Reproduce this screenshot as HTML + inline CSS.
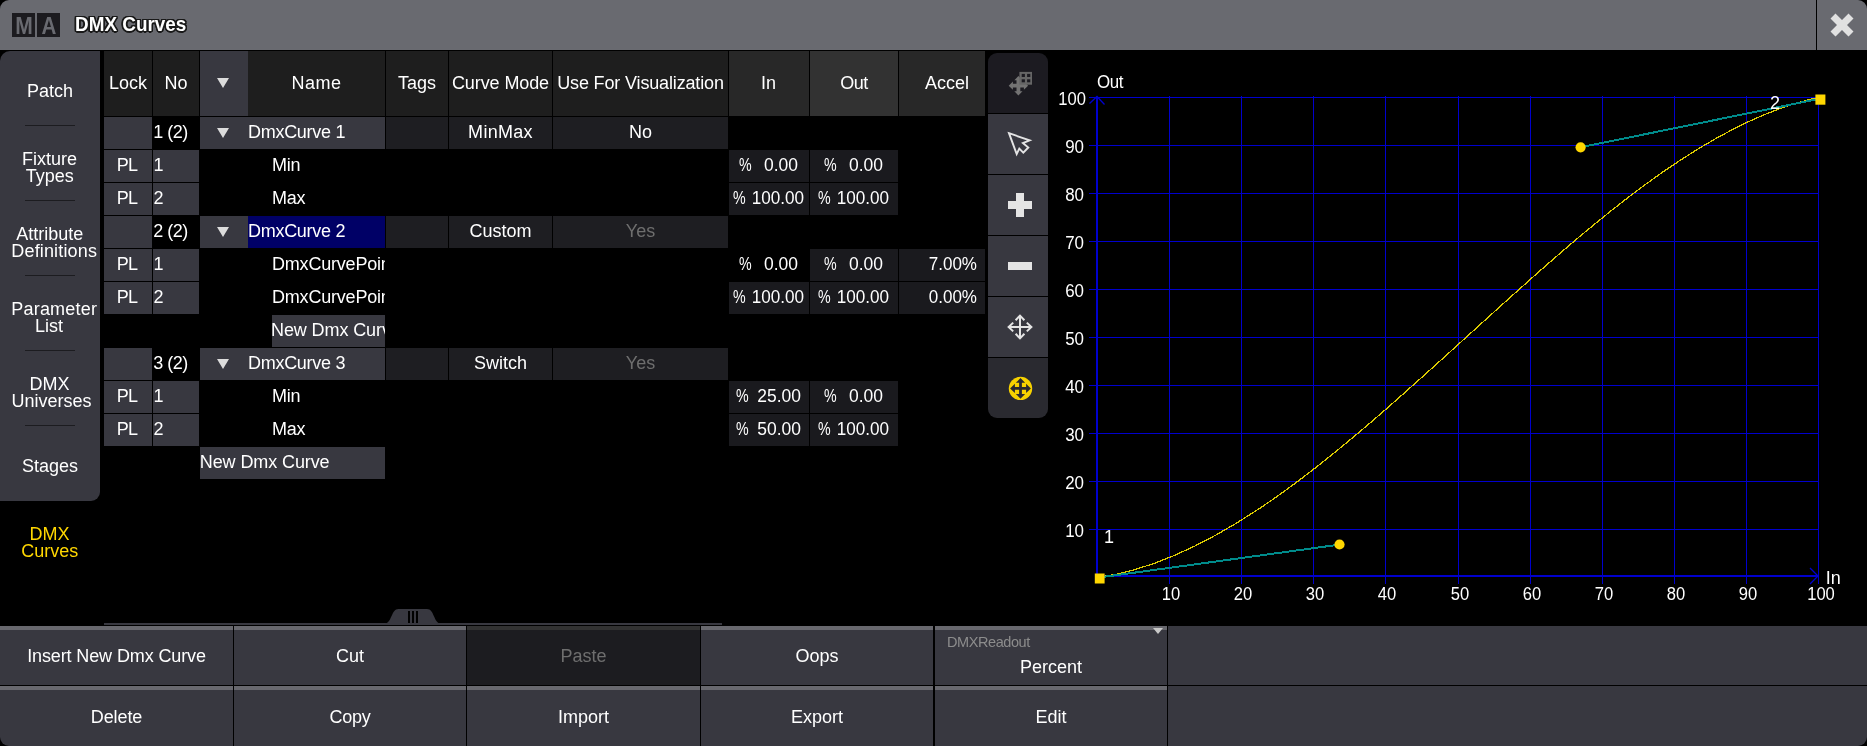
<!DOCTYPE html>
<html lang="en"><head><meta charset="utf-8"><title>DMX Curves</title>
<style>
html,body{margin:0;padding:0;background:#000;}
body{width:1867px;height:746px;position:relative;overflow:hidden;font-family:"Liberation Sans",sans-serif;font-size:18px;line-height:22px;color:#fff;}
.b{position:absolute;overflow:hidden;}
.t{position:absolute;white-space:pre;}
svg{position:absolute;left:0;top:0;}
#r{position:absolute;left:0;top:0;width:1867px;height:746px;will-change:transform;}
.sx{transform-origin:0 50%;}
</style></head><body><div id="r">

<div class="b" style="left:0px;top:0px;width:1867px;height:50px;background:#696a70;border-radius:9px 9px 0 0;"></div>
<div class="b" style="left:1816px;top:0px;width:1px;height:50px;background:#000;"></div>
<div class="b" style="left:12px;top:13px;width:23px;height:24px;background:#1c1b1f;"></div>
<div class="b" style="left:37px;top:13px;width:23px;height:24px;background:#1c1b1f;"></div>
<div class="t" style="top:11.00px;left:3.50px;width:40px;text-align:center;font-size:24.5px;line-height:29px;color:#696a70;font-weight:bold;transform:scaleX(0.86);">M</div>
<div class="t" style="top:11.00px;left:28.70px;width:40px;text-align:center;font-size:24.5px;line-height:29px;color:#696a70;font-weight:bold;transform:scaleX(0.84);">A</div>
<div class="t" style="top:11.00px;left:74.50px;font-size:21px;line-height:25px;font-weight:bold;transform:scaleX(0.9);transform-origin:0 50%;text-shadow:1.67px 0.00px 0 #1a1a1a,1.54px 0.57px 0 #1a1a1a,1.18px 1.06px 0 #1a1a1a,0.64px 1.39px 0 #1a1a1a,0.00px 1.50px 0 #1a1a1a,-0.64px 1.39px 0 #1a1a1a,-1.18px 1.06px 0 #1a1a1a,-1.54px 0.57px 0 #1a1a1a,-1.67px 0.00px 0 #1a1a1a,-1.54px -0.57px 0 #1a1a1a,-1.18px -1.06px 0 #1a1a1a,-0.64px -1.39px 0 #1a1a1a,-0.00px -1.50px 0 #1a1a1a,0.64px -1.39px 0 #1a1a1a,1.18px -1.06px 0 #1a1a1a,1.54px -0.57px 0 #1a1a1a,0 0 1px #1a1a1a;">DMX Curves</div>
<svg width="1867" height="746"><path d="M1830.5,18.5L1835.5,13.5L1842,20L1848.5,13.5L1853.5,18.5L1847,25L1853.5,31.5L1848.5,36.5L1842,30L1835.5,36.5L1830.5,31.5L1837,25Z" fill="#e1e1e1"/></svg>
<div class="b" style="left:0px;top:51px;width:100px;height:450px;background:#383840;border-radius:10px 0 9px 0;"></div>
<div class="b" style="left:25px;top:125px;width:50px;height:1px;background:#1c1c20;"></div>
<div class="b" style="left:25px;top:200px;width:50px;height:1px;background:#1c1c20;"></div>
<div class="b" style="left:25px;top:275px;width:50px;height:1px;background:#1c1c20;"></div>
<div class="b" style="left:25px;top:350px;width:50px;height:1px;background:#1c1c20;"></div>
<div class="b" style="left:25px;top:425px;width:50px;height:1px;background:#1c1c20;"></div>
<div class="t" style="top:80.00px;left:-10.00px;width:120px;text-align:center;">Patch</div>
<div class="t" style="top:148.00px;left:-10.50px;width:120px;text-align:center;">Fixture</div>
<div class="t" style="top:165.00px;left:-10.20px;width:120px;text-align:center;">Types</div>
<div class="t" style="top:223.00px;left:-10.20px;width:120px;text-align:center;">Attribute</div>
<div class="t" style="top:240.00px;left:-5.80px;width:120px;text-align:center;letter-spacing:0.15px;">Definitions</div>
<div class="t" style="top:298.00px;left:-5.80px;width:120px;text-align:center;letter-spacing:0.2px;">Parameter</div>
<div class="t" style="top:315.00px;left:-11.00px;width:120px;text-align:center;">List</div>
<div class="t" style="top:373.00px;left:-10.50px;width:120px;text-align:center;">DMX</div>
<div class="t" style="top:390.00px;left:-8.50px;width:120px;text-align:center;">Universes</div>
<div class="t" style="top:455.00px;left:-10.00px;width:120px;text-align:center;">Stages</div>
<div class="t" style="top:523.00px;left:-10.50px;width:120px;text-align:center;color:#ffd700;">DMX</div>
<div class="t" style="top:540.00px;left:-10.20px;width:120px;text-align:center;color:#ffd700;">Curves</div>
<div class="b" style="left:104px;top:51px;width:48px;height:65px;background:#1e1e1e;"></div>
<div class="b" style="left:153px;top:51px;width:46px;height:65px;background:#1e1e1e;"></div>
<div class="b" style="left:200px;top:51px;width:185px;height:65px;background:#1e1e1e;"></div>
<div class="b" style="left:386px;top:51px;width:62px;height:65px;background:#1e1e1e;"></div>
<div class="b" style="left:449px;top:51px;width:103px;height:65px;background:#1e1e1e;"></div>
<div class="b" style="left:553px;top:51px;width:175px;height:65px;background:#1e1e1e;"></div>
<div class="b" style="left:729px;top:51px;width:80px;height:65px;background:#282828;"></div>
<div class="b" style="left:810px;top:51px;width:88px;height:65px;background:#323232;"></div>
<div class="b" style="left:899px;top:51px;width:86px;height:65px;background:#282828;"></div>
<div class="b" style="left:200px;top:51px;width:48px;height:65px;background:#383840;"></div>
<div class="t" style="top:72.00px;left:98.00px;width:60px;text-align:center;">Lock</div>
<div class="t" style="top:72.00px;left:146.00px;width:60px;text-align:center;">No</div>
<div class="t" style="top:72.00px;left:266.50px;width:100px;text-align:center;letter-spacing:0.5px;">Name</div>
<div class="t" style="top:72.00px;left:377.00px;width:80px;text-align:center;">Tags</div>
<div class="t" style="top:72.00px;left:430.50px;width:140px;text-align:center;letter-spacing:-0.1px;">Curve Mode</div>
<div class="t" style="top:72.00px;left:530.50px;width:220px;text-align:center;letter-spacing:-0.15px;">Use For Visualization</div>
<div class="t" style="top:72.00px;left:738.50px;width:60px;text-align:center;">In</div>
<div class="t" style="top:72.00px;left:824.00px;width:60px;text-align:center;letter-spacing:-0.5px;">Out</div>
<div class="t" style="top:72.00px;left:907.00px;width:80px;text-align:center;">Accel</div>
<div class="b" style="left:104px;top:117px;width:48px;height:32px;background:#383840;"></div>
<div class="t" style="top:121.00px;left:153.20px;letter-spacing:-0.5px;">1 (2)</div>
<div class="b" style="left:200px;top:117px;width:185px;height:32px;background:#383840;"></div>
<div class="t" style="top:121.00px;left:248.00px;letter-spacing:-0.28px;">DmxCurve 1</div>
<div class="b" style="left:386px;top:117px;width:62px;height:32px;background:#1e1e22;"></div>
<div class="b" style="left:449px;top:117px;width:103px;height:32px;background:#1e1e22;"></div>
<div class="b" style="left:553px;top:117px;width:175px;height:32px;background:#1e1e22;"></div>
<div class="t" style="top:121.00px;left:440.50px;width:120px;text-align:center;letter-spacing:0.3px;">MinMax</div>
<div class="t" style="top:121.00px;left:580.50px;width:120px;text-align:center;">No</div>
<div class="b" style="left:104px;top:150px;width:48px;height:32px;background:#383840;"></div>
<div class="b" style="left:153px;top:150px;width:46px;height:32px;background:#383840;"></div>
<div class="t" style="top:154.00px;left:103.00px;width:48px;text-align:center;letter-spacing:-0.7px;">PL</div>
<div class="t" style="top:154.00px;left:153.60px;">1</div>
<div class="b" style="left:272px;top:150px;width:113px;height:32px;">
<div class="t" style="left:0;top:4.00px;letter-spacing:-0.2px;">Min</div></div>
<div class="b" style="left:729px;top:150px;width:80px;height:32px;background:#1a1a1e;"></div>
<div class="b" style="left:810px;top:150px;width:88px;height:32px;background:#1a1a1e;"></div>
<div class="t" style="top:154.00px;left:739.40px;transform:scaleX(0.79);transform-origin:0 50%;">%</div>
<div class="t" style="top:154.00px;left:728.10px;width:70px;text-align:right;transform:scaleX(0.97);transform-origin:100% 50%;">0.00</div>
<div class="t" style="top:154.00px;left:824.40px;transform:scaleX(0.79);transform-origin:0 50%;">%</div>
<div class="t" style="top:154.00px;left:813.10px;width:70px;text-align:right;transform:scaleX(0.97);transform-origin:100% 50%;">0.00</div>
<div class="b" style="left:104px;top:183px;width:48px;height:32px;background:#383840;"></div>
<div class="b" style="left:153px;top:183px;width:46px;height:32px;background:#383840;"></div>
<div class="t" style="top:187.00px;left:103.00px;width:48px;text-align:center;letter-spacing:-0.7px;">PL</div>
<div class="t" style="top:187.00px;left:153.60px;">2</div>
<div class="b" style="left:272px;top:183px;width:113px;height:32px;">
<div class="t" style="left:0;top:4.00px;letter-spacing:-0.2px;">Max</div></div>
<div class="b" style="left:729px;top:183px;width:80px;height:32px;background:#1a1a1e;"></div>
<div class="b" style="left:810px;top:183px;width:88px;height:32px;background:#1a1a1e;"></div>
<div class="t" style="top:187.00px;left:733.00px;transform:scaleX(0.79);transform-origin:0 50%;">%</div>
<div class="t" style="top:187.00px;left:734.20px;width:70px;text-align:right;transform:scaleX(0.95);transform-origin:100% 50%;">100.00</div>
<div class="t" style="top:187.00px;left:818.00px;transform:scaleX(0.79);transform-origin:0 50%;">%</div>
<div class="t" style="top:187.00px;left:819.20px;width:70px;text-align:right;transform:scaleX(0.95);transform-origin:100% 50%;">100.00</div>
<div class="b" style="left:104px;top:216px;width:48px;height:32px;background:#383840;"></div>
<div class="t" style="top:220.00px;left:153.20px;letter-spacing:-0.5px;">2 (2)</div>
<div class="b" style="left:200px;top:216px;width:185px;height:32px;background:#383840;"></div>
<div class="b" style="left:248px;top:216px;width:137px;height:32px;background:#000066;"></div>
<div class="t" style="top:220.00px;left:248.00px;letter-spacing:-0.28px;">DmxCurve 2</div>
<div class="b" style="left:386px;top:216px;width:62px;height:32px;background:#1e1e22;"></div>
<div class="b" style="left:449px;top:216px;width:103px;height:32px;background:#1e1e22;"></div>
<div class="b" style="left:553px;top:216px;width:175px;height:32px;background:#1e1e22;"></div>
<div class="t" style="top:220.00px;left:440.50px;width:120px;text-align:center;">Custom</div>
<div class="t" style="top:220.00px;left:580.50px;width:120px;text-align:center;color:#6e6e6e;">Yes</div>
<div class="b" style="left:104px;top:249px;width:48px;height:32px;background:#383840;"></div>
<div class="b" style="left:153px;top:249px;width:46px;height:32px;background:#383840;"></div>
<div class="t" style="top:253.00px;left:103.00px;width:48px;text-align:center;letter-spacing:-0.7px;">PL</div>
<div class="t" style="top:253.00px;left:153.60px;">1</div>
<div class="b" style="left:272px;top:249px;width:113px;height:32px;">
<div class="t" style="left:0;top:4.00px;letter-spacing:-0.2px;">DmxCurvePoint 1</div></div>
<div class="b" style="left:810px;top:249px;width:88px;height:32px;background:#1a1a1e;"></div>
<div class="t" style="top:253.00px;left:739.40px;transform:scaleX(0.79);transform-origin:0 50%;">%</div>
<div class="t" style="top:253.00px;left:728.10px;width:70px;text-align:right;transform:scaleX(0.97);transform-origin:100% 50%;">0.00</div>
<div class="t" style="top:253.00px;left:824.40px;transform:scaleX(0.79);transform-origin:0 50%;">%</div>
<div class="t" style="top:253.00px;left:813.10px;width:70px;text-align:right;transform:scaleX(0.97);transform-origin:100% 50%;">0.00</div>
<div class="b" style="left:899px;top:249px;width:86px;height:32px;background:#1a1a1e;"></div>
<div class="t" style="top:253.00px;left:897.20px;width:80px;text-align:right;transform:scaleX(0.945);transform-origin:100% 50%;">7.00%</div>
<div class="b" style="left:104px;top:282px;width:48px;height:32px;background:#383840;"></div>
<div class="b" style="left:153px;top:282px;width:46px;height:32px;background:#383840;"></div>
<div class="t" style="top:286.00px;left:103.00px;width:48px;text-align:center;letter-spacing:-0.7px;">PL</div>
<div class="t" style="top:286.00px;left:153.60px;">2</div>
<div class="b" style="left:272px;top:282px;width:113px;height:32px;">
<div class="t" style="left:0;top:4.00px;letter-spacing:-0.2px;">DmxCurvePoint 2</div></div>
<div class="b" style="left:729px;top:282px;width:80px;height:32px;background:#1a1a1e;"></div>
<div class="b" style="left:810px;top:282px;width:88px;height:32px;background:#1a1a1e;"></div>
<div class="t" style="top:286.00px;left:733.00px;transform:scaleX(0.79);transform-origin:0 50%;">%</div>
<div class="t" style="top:286.00px;left:734.20px;width:70px;text-align:right;transform:scaleX(0.95);transform-origin:100% 50%;">100.00</div>
<div class="t" style="top:286.00px;left:818.00px;transform:scaleX(0.79);transform-origin:0 50%;">%</div>
<div class="t" style="top:286.00px;left:819.20px;width:70px;text-align:right;transform:scaleX(0.95);transform-origin:100% 50%;">100.00</div>
<div class="b" style="left:899px;top:282px;width:86px;height:32px;background:#1a1a1e;"></div>
<div class="t" style="top:286.00px;left:897.20px;width:80px;text-align:right;transform:scaleX(0.945);transform-origin:100% 50%;">0.00%</div>
<div class="b" style="left:272px;top:315px;width:113px;height:32px;background:#383840;"><div class="t" style="left:-1px;top:4.00px;letter-spacing:-0.1px;">New Dmx Curve Point</div></div>
<div class="b" style="left:104px;top:348px;width:48px;height:32px;background:#383840;"></div>
<div class="t" style="top:352.00px;left:153.20px;letter-spacing:-0.5px;">3 (2)</div>
<div class="b" style="left:200px;top:348px;width:185px;height:32px;background:#383840;"></div>
<div class="t" style="top:352.00px;left:248.00px;letter-spacing:-0.28px;">DmxCurve 3</div>
<div class="b" style="left:386px;top:348px;width:62px;height:32px;background:#1e1e22;"></div>
<div class="b" style="left:449px;top:348px;width:103px;height:32px;background:#1e1e22;"></div>
<div class="b" style="left:553px;top:348px;width:175px;height:32px;background:#1e1e22;"></div>
<div class="t" style="top:352.00px;left:440.50px;width:120px;text-align:center;">Switch</div>
<div class="t" style="top:352.00px;left:580.50px;width:120px;text-align:center;color:#6e6e6e;">Yes</div>
<div class="b" style="left:104px;top:381px;width:48px;height:32px;background:#383840;"></div>
<div class="b" style="left:153px;top:381px;width:46px;height:32px;background:#383840;"></div>
<div class="t" style="top:385.00px;left:103.00px;width:48px;text-align:center;letter-spacing:-0.7px;">PL</div>
<div class="t" style="top:385.00px;left:153.60px;">1</div>
<div class="b" style="left:272px;top:381px;width:113px;height:32px;">
<div class="t" style="left:0;top:4.00px;letter-spacing:-0.2px;">Min</div></div>
<div class="b" style="left:729px;top:381px;width:80px;height:32px;background:#1a1a1e;"></div>
<div class="b" style="left:810px;top:381px;width:88px;height:32px;background:#1a1a1e;"></div>
<div class="t" style="top:385.00px;left:736.20px;transform:scaleX(0.79);transform-origin:0 50%;">%</div>
<div class="t" style="top:385.00px;left:731.00px;width:70px;text-align:right;transform:scaleX(0.97);transform-origin:100% 50%;">25.00</div>
<div class="t" style="top:385.00px;left:824.40px;transform:scaleX(0.79);transform-origin:0 50%;">%</div>
<div class="t" style="top:385.00px;left:813.10px;width:70px;text-align:right;transform:scaleX(0.97);transform-origin:100% 50%;">0.00</div>
<div class="b" style="left:104px;top:414px;width:48px;height:32px;background:#383840;"></div>
<div class="b" style="left:153px;top:414px;width:46px;height:32px;background:#383840;"></div>
<div class="t" style="top:418.00px;left:103.00px;width:48px;text-align:center;letter-spacing:-0.7px;">PL</div>
<div class="t" style="top:418.00px;left:153.60px;">2</div>
<div class="b" style="left:272px;top:414px;width:113px;height:32px;">
<div class="t" style="left:0;top:4.00px;letter-spacing:-0.2px;">Max</div></div>
<div class="b" style="left:729px;top:414px;width:80px;height:32px;background:#1a1a1e;"></div>
<div class="b" style="left:810px;top:414px;width:88px;height:32px;background:#1a1a1e;"></div>
<div class="t" style="top:418.00px;left:736.20px;transform:scaleX(0.79);transform-origin:0 50%;">%</div>
<div class="t" style="top:418.00px;left:731.00px;width:70px;text-align:right;transform:scaleX(0.97);transform-origin:100% 50%;">50.00</div>
<div class="t" style="top:418.00px;left:818.00px;transform:scaleX(0.79);transform-origin:0 50%;">%</div>
<div class="t" style="top:418.00px;left:819.20px;width:70px;text-align:right;transform:scaleX(0.95);transform-origin:100% 50%;">100.00</div>
<div class="b" style="left:200px;top:447px;width:185px;height:32px;background:#383840;"></div>
<div class="t" style="top:451.00px;left:199.80px;letter-spacing:-0.1px;">New Dmx Curve</div>
<svg width="1867" height="746" style="pointer-events:none"><polygon points="217.0,78.1 229.0,78.1 223,88.1" fill="#dcdcdc"/></svg>
<svg width="1867" height="746" style="pointer-events:none"><polygon points="217.0,128.1 229.0,128.1 223,138.1" fill="#dcdcdc"/></svg>
<svg width="1867" height="746" style="pointer-events:none"><polygon points="217.0,227.1 229.0,227.1 223,237.1" fill="#dcdcdc"/></svg>
<svg width="1867" height="746" style="pointer-events:none"><polygon points="217.0,359.1 229.0,359.1 223,369.1" fill="#dcdcdc"/></svg>
<div class="b" style="left:104px;top:623px;width:618px;height:2px;background:#383840;"></div>
<svg width="1867" height="746"><path d="M384.5,623.5 C392,623.5 391,609 398.5,609 L427,609 C434.5,609 433.5,623.5 441,623.5 Z" fill="#383840"/><rect x="408" y="611" width="2" height="12" fill="#000"/><rect x="412" y="611" width="2" height="12" fill="#000"/><rect x="416" y="611" width="2" height="12" fill="#000"/></svg>
<div class="b" style="left:988px;top:53px;width:60px;height:60px;background:#1c1b21;border-radius:9px 9px 0 0;"></div>
<div class="b" style="left:988px;top:114px;width:60px;height:60px;background:#383840;border-radius:0;"></div>
<div class="b" style="left:988px;top:175px;width:60px;height:60px;background:#383840;border-radius:0;"></div>
<div class="b" style="left:988px;top:236px;width:60px;height:60px;background:#383840;border-radius:0;"></div>
<div class="b" style="left:988px;top:297px;width:60px;height:60px;background:#383840;border-radius:0;"></div>
<div class="b" style="left:988px;top:358px;width:60px;height:60px;background:#2a2a30;border-radius:0 0 9px 9px;"></div>
<svg width="1867" height="746">
<g fill="#6c6c6c">
<polygon points="1016.50,83.80 1016.50,80.20 1014.30,80.20 1018.40,76.00 1022.50,80.20 1020.30,80.20 1020.30,83.80 1023.90,83.80 1023.90,81.60 1028.10,85.70 1023.90,89.80 1023.90,87.60 1020.30,87.60 1020.30,91.20 1022.50,91.20 1018.40,95.40 1014.30,91.20 1016.50,91.20 1016.50,87.60 1012.90,87.60 1012.90,89.80 1008.70,85.70 1012.90,81.60 1012.90,83.80" fill="#737373"/><rect x="1019.4" y="71.9" width="12.6" height="12.8" fill="#666"/></g>
<g fill="#1c1b21"><rect x="1021.7" y="73.9" width="3.2" height="3.1"/><rect x="1027.1" y="73.9" width="3.2" height="3.1"/><rect x="1021.7" y="79.3" width="3.2" height="3"/><rect x="1027.1" y="79.3" width="3.2" height="3"/></g>
<polygon points="21,19.2 41.7,26.4 34.9,29.1 40.3,33.5 35.3,38.7 31.3,34.7 28.7,40" transform="translate(988,114)" fill="none" stroke="#e4e4e4" stroke-width="1.9" stroke-linejoin="miter"/>
<path d="M1016,193h8v8h8v8h-8v8h-8v-8h-8v-8h8z" fill="#e4e4e4"/>
<rect x="1008" y="262" width="24" height="8" fill="#e4e4e4"/>
<g stroke="#e4e4e4" stroke-width="2" fill="none"><path d="M1020,315.5V338.5 M1008.5,327H1031.5 M1015.6,320.2L1020,315.6L1024.4,320.2 M1015.6,333.8L1020,338.4L1024.4,333.8 M1013.2,322.6L1008.6,327L1013.2,331.4 M1026.8,322.6L1031.4,327L1026.8,331.4"/></g>
<circle cx="1020.5" cy="388.4" r="11.7" fill="#f7d200"/>
<polygon points="1019.10,387.00 1019.10,382.80 1015.90,382.80 1020.50,378.00 1025.10,382.80 1021.90,382.80 1021.90,387.00 1026.10,387.00 1026.10,383.80 1030.90,388.40 1026.10,393.00 1026.10,389.80 1021.90,389.80 1021.90,394.00 1025.10,394.00 1020.50,398.80 1015.90,394.00 1019.10,394.00 1019.10,389.80 1014.90,389.80 1014.90,393.00 1010.10,388.40 1014.90,383.80 1014.90,387.00" fill="#2a2a30"/>
</svg>
<svg width="1867" height="746" shape-rendering="crispEdges">
<rect x="1169" y="96" width="1" height="488" fill="#0000cd"/>
<rect x="1241" y="96" width="1" height="488" fill="#0000cd"/>
<rect x="1313" y="96" width="1" height="488" fill="#0000cd"/>
<rect x="1385" y="96" width="1" height="488" fill="#0000cd"/>
<rect x="1458" y="96" width="1" height="488" fill="#0000cd"/>
<rect x="1530" y="96" width="1" height="488" fill="#0000cd"/>
<rect x="1602" y="96" width="1" height="488" fill="#0000cd"/>
<rect x="1674" y="96" width="1" height="488" fill="#0000cd"/>
<rect x="1746" y="96" width="1" height="488" fill="#0000cd"/>
<rect x="1818" y="96" width="1" height="488" fill="#0000cd"/>
<rect x="1089" y="97" width="730" height="1" fill="#0000cd"/>
<rect x="1089" y="145" width="730" height="1" fill="#0000cd"/>
<rect x="1089" y="193" width="730" height="1" fill="#0000cd"/>
<rect x="1089" y="241" width="730" height="1" fill="#0000cd"/>
<rect x="1089" y="289" width="730" height="1" fill="#0000cd"/>
<rect x="1089" y="337" width="730" height="1" fill="#0000cd"/>
<rect x="1089" y="385" width="730" height="1" fill="#0000cd"/>
<rect x="1089" y="433" width="730" height="1" fill="#0000cd"/>
<rect x="1089" y="481" width="730" height="1" fill="#0000cd"/>
<rect x="1089" y="529" width="730" height="1" fill="#0000cd"/>
<rect x="1096" y="97" width="2" height="480" fill="#0000cd"/>
<rect x="1096" y="575" width="723" height="2" fill="#0000cd"/>
</svg>
<svg width="1867" height="746"><g stroke="#0000cd" stroke-width="1.3" fill="none"><path d="M1089.5,103.5L1097,96.5L1104.5,104.5"/><path d="M1810,568L1818,576L1810,584"/></g>
<g shape-rendering="crispEdges"><path d="M1097.5,577.5 C1335.1,546.6 1581.4,147.1 1818.5,97.5" stroke="#dccb00" stroke-width="1.25" fill="none"/>
<line x1="1097.5" y1="577.7" x2="1339.5" y2="544.6" stroke="#008b8b" stroke-width="2"/>
<line x1="1818.5" y1="99" x2="1580.6" y2="147.3" stroke="#008b8b" stroke-width="2"/></g>
<circle cx="1339.5" cy="544.5" r="5.1" fill="#ffd700"/>
<circle cx="1580.6" cy="147.3" r="5.1" fill="#ffd700"/>
<rect x="1094.8" y="573.5" width="9.8" height="10" fill="#ffd700"/>
<rect x="1815.4" y="94.5" width="10" height="10.2" fill="#ffd700"/>
</svg>
<div class="t" style="top:88.00px;left:1025.90px;width:60px;text-align:right;transform:scaleX(0.92);transform-origin:100% 50%;">100</div>
<div class="t" style="top:136.00px;left:1023.60px;width:60px;text-align:right;transform:scaleX(0.94);transform-origin:100% 50%;">90</div>
<div class="t" style="top:184.00px;left:1023.60px;width:60px;text-align:right;transform:scaleX(0.94);transform-origin:100% 50%;">80</div>
<div class="t" style="top:232.00px;left:1023.60px;width:60px;text-align:right;transform:scaleX(0.94);transform-origin:100% 50%;">70</div>
<div class="t" style="top:280.00px;left:1023.60px;width:60px;text-align:right;transform:scaleX(0.94);transform-origin:100% 50%;">60</div>
<div class="t" style="top:328.00px;left:1023.60px;width:60px;text-align:right;transform:scaleX(0.94);transform-origin:100% 50%;">50</div>
<div class="t" style="top:376.00px;left:1023.60px;width:60px;text-align:right;transform:scaleX(0.94);transform-origin:100% 50%;">40</div>
<div class="t" style="top:424.00px;left:1023.60px;width:60px;text-align:right;transform:scaleX(0.94);transform-origin:100% 50%;">30</div>
<div class="t" style="top:472.00px;left:1023.60px;width:60px;text-align:right;transform:scaleX(0.94);transform-origin:100% 50%;">20</div>
<div class="t" style="top:520.00px;left:1023.60px;width:60px;text-align:right;transform:scaleX(0.94);transform-origin:100% 50%;">10</div>
<div class="t" style="top:583.00px;left:1140.50px;width:60px;text-align:center;transform:scaleX(0.92);">10</div>
<div class="t" style="top:583.00px;left:1212.50px;width:60px;text-align:center;transform:scaleX(0.92);">20</div>
<div class="t" style="top:583.00px;left:1284.50px;width:60px;text-align:center;transform:scaleX(0.92);">30</div>
<div class="t" style="top:583.00px;left:1356.50px;width:60px;text-align:center;transform:scaleX(0.92);">40</div>
<div class="t" style="top:583.00px;left:1429.50px;width:60px;text-align:center;transform:scaleX(0.92);">50</div>
<div class="t" style="top:583.00px;left:1501.50px;width:60px;text-align:center;transform:scaleX(0.92);">60</div>
<div class="t" style="top:583.00px;left:1573.50px;width:60px;text-align:center;transform:scaleX(0.92);">70</div>
<div class="t" style="top:583.00px;left:1645.50px;width:60px;text-align:center;transform:scaleX(0.92);">80</div>
<div class="t" style="top:583.00px;left:1717.50px;width:60px;text-align:center;transform:scaleX(0.92);">90</div>
<div class="t" style="top:583.00px;left:1791.00px;width:60px;text-align:center;transform:scaleX(0.92);">100</div>
<div class="t" style="top:71.00px;left:1096.80px;letter-spacing:-0.5px;transform:scaleX(0.94);transform-origin:0 50%;">Out</div>
<div class="t" style="top:567.00px;left:1825.70px;">In</div>
<div class="t" style="top:526.00px;left:1104.00px;">1</div>
<div class="t" style="top:92.00px;left:1770.00px;">2</div>
<div class="b" style="left:0px;top:626px;width:233px;height:59px;background:#383840;"><div class="b" style="left:0;top:0;width:100%;height:4px;background:#68686e"></div></div>
<div class="t" style="top:645.00px;left:1.50px;width:230px;text-align:center;letter-spacing:-0.12px;">Insert New Dmx Curve</div>
<div class="b" style="left:234px;top:626px;width:232px;height:59px;background:#383840;"><div class="b" style="left:0;top:0;width:100%;height:4px;background:#68686e"></div></div>
<div class="t" style="top:645.00px;left:235.00px;width:230px;text-align:center;">Cut</div>
<div class="b" style="left:467px;top:626px;width:233px;height:59px;background:#1c1c20;"><div class="b" style="left:0;top:0;width:100%;height:4px;background:#323232"></div></div>
<div class="t" style="top:645.00px;left:468.50px;width:230px;text-align:center;color:#6e6e6e;">Paste</div>
<div class="b" style="left:701px;top:626px;width:232px;height:59px;background:#383840;"><div class="b" style="left:0;top:0;width:100%;height:4px;background:#68686e"></div></div>
<div class="t" style="top:645.00px;left:702.00px;width:230px;text-align:center;">Oops</div>
<div class="b" style="left:935px;top:626px;width:232px;height:59px;background:#383840;"><div class="b" style="left:0;top:0;width:100%;height:4px;background:#68686e"></div></div>
<div class="b" style="left:1168px;top:626px;width:699px;height:59px;background:#383840;"></div>
<div class="b" style="left:0px;top:686px;width:233px;height:60px;background:#383840;border-radius:0 0 0 9px;"><div class="b" style="left:0;top:0;width:100%;height:4px;background:#68686e"></div></div>
<div class="t" style="top:706.00px;left:1.50px;width:230px;text-align:center;letter-spacing:-0.1px;">Delete</div>
<div class="b" style="left:234px;top:686px;width:232px;height:60px;background:#383840;"><div class="b" style="left:0;top:0;width:100%;height:4px;background:#68686e"></div></div>
<div class="t" style="top:706.00px;left:235.00px;width:230px;text-align:center;letter-spacing:-0.3px;">Copy</div>
<div class="b" style="left:467px;top:686px;width:233px;height:60px;background:#383840;"><div class="b" style="left:0;top:0;width:100%;height:4px;background:#68686e"></div></div>
<div class="t" style="top:706.00px;left:468.50px;width:230px;text-align:center;">Import</div>
<div class="b" style="left:701px;top:686px;width:232px;height:60px;background:#383840;"><div class="b" style="left:0;top:0;width:100%;height:4px;background:#68686e"></div></div>
<div class="t" style="top:706.00px;left:702.00px;width:230px;text-align:center;">Export</div>
<div class="b" style="left:935px;top:686px;width:232px;height:60px;background:#383840;"><div class="b" style="left:0;top:0;width:100%;height:4px;background:#68686e"></div></div>
<div class="t" style="top:706.00px;left:936.00px;width:230px;text-align:center;">Edit</div>
<div class="b" style="left:1168px;top:686px;width:699px;height:60px;background:#383840;border-radius:0 0 9px 0;"></div>
<div class="t" style="top:633.50px;left:947.00px;font-size:14.5px;line-height:17px;color:#8c8c8c;letter-spacing:-0.42px;">DMXReadout</div>
<div class="t" style="top:656.00px;left:951.00px;width:200px;text-align:center;">Percent</div>
<svg width="1867" height="746"><polygon points="1153,628 1163,628 1158,634" fill="#c8c8c8"/></svg>
</div></body></html>
